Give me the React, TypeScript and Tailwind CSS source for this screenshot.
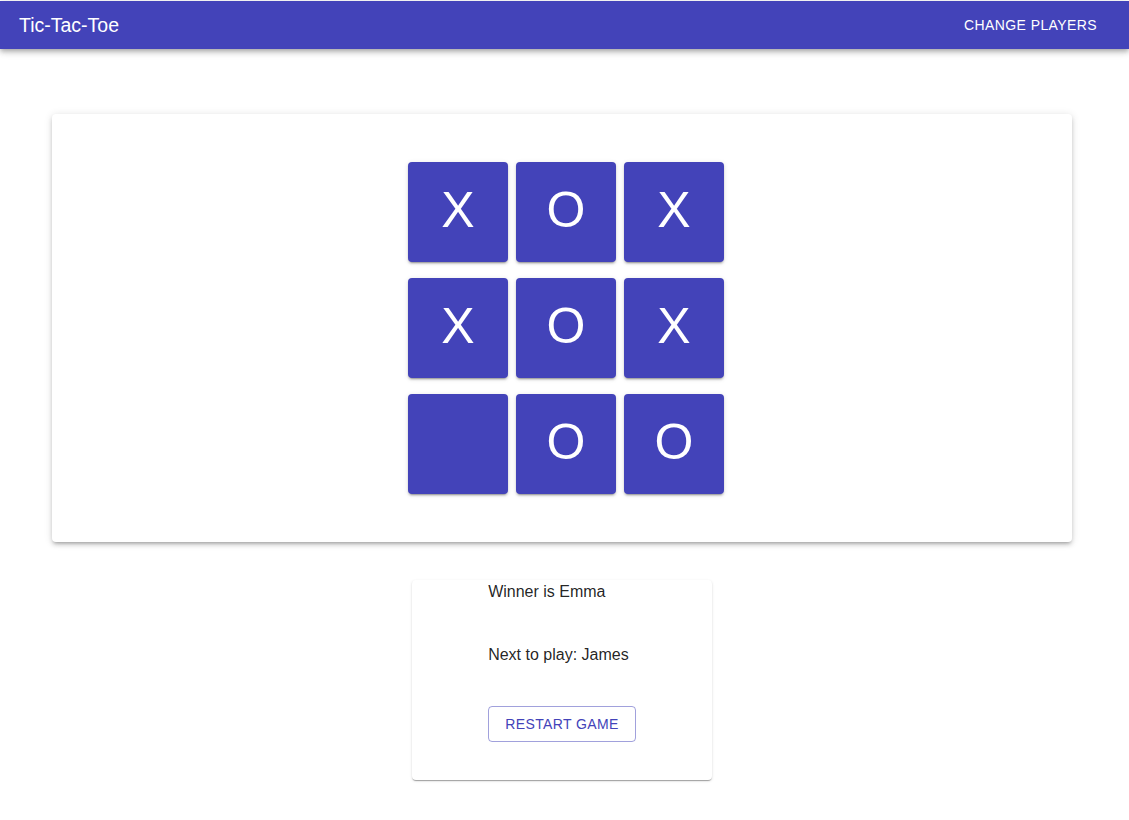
import { useState } from "react";

const board = ["X", "O", "X", "X", "O", "X", "", "O", "O"];

export default function App() {
  const [cells] = useState<string[]>(board);

  return (
    <div className="min-h-screen bg-white pt-px font-['Liberation_Sans',Arial,sans-serif] text-[rgba(0,0,0,0.87)]">
      {/* App bar */}
      <header className="flex h-12 items-center justify-between bg-[#4343b9] pl-[19px] pr-[24px] text-white shadow-[0_2px_4px_-1px_rgba(0,0,0,0.2),0_4px_5px_0_rgba(0,0,0,0.14),0_1px_10px_0_rgba(0,0,0,0.12)]">
        <h1 className="pt-[2px] text-[19.5px] leading-none">Tic-Tac-Toe</h1>
        <button className="rounded px-2 py-1.5 text-[14px] uppercase tracking-[0.4px]">
          Change Players
        </button>
      </header>

      {/* Board */}
      <div className="mt-[65px] pl-[52px] pr-[57px]">
        <div className="flex justify-center rounded bg-white py-12 pl-2 shadow-[0_3px_3px_-2px_rgba(0,0,0,0.2),0_3px_4px_0_rgba(0,0,0,0.14),0_1px_8px_0_rgba(0,0,0,0.12)]">
          <div className="grid grid-cols-[repeat(3,100px)] gap-x-2 gap-y-4">
            {cells.map((c, i) => (
              <button
                key={i}
                className="flex h-[100px] w-[100px] items-center justify-center rounded bg-[#4343b9] pb-1 text-[50px] leading-none text-white shadow-[0_3px_1px_-2px_rgba(0,0,0,0.2),0_2px_2px_0_rgba(0,0,0,0.14),0_1px_5px_0_rgba(0,0,0,0.12)]"
              >
                {c}
              </button>
            ))}
          </div>
        </div>
      </div>

      {/* Status */}
      <div className="mt-[38px] flex justify-center pr-[5px]">
        <div className="flex w-[300px] justify-center rounded bg-white pb-[38px] shadow-[0_2px_1px_-1px_rgba(0,0,0,0.2),0_1px_1px_0_rgba(0,0,0,0.14),0_1px_3px_0_rgba(0,0,0,0.12)]">
          <div className="flex flex-col items-start text-[16px] leading-6">
            <p>Winner is Emma</p>
            <p className="mt-[39px]">Next to play: James</p>
            <button className="mt-[39px] h-9 rounded border border-[rgba(67,67,185,0.5)] px-4 text-[14px] uppercase tracking-[0.4px] text-[#4343b9]">
              Restart Game
            </button>
          </div>
        </div>
      </div>
    </div>
  );
}
